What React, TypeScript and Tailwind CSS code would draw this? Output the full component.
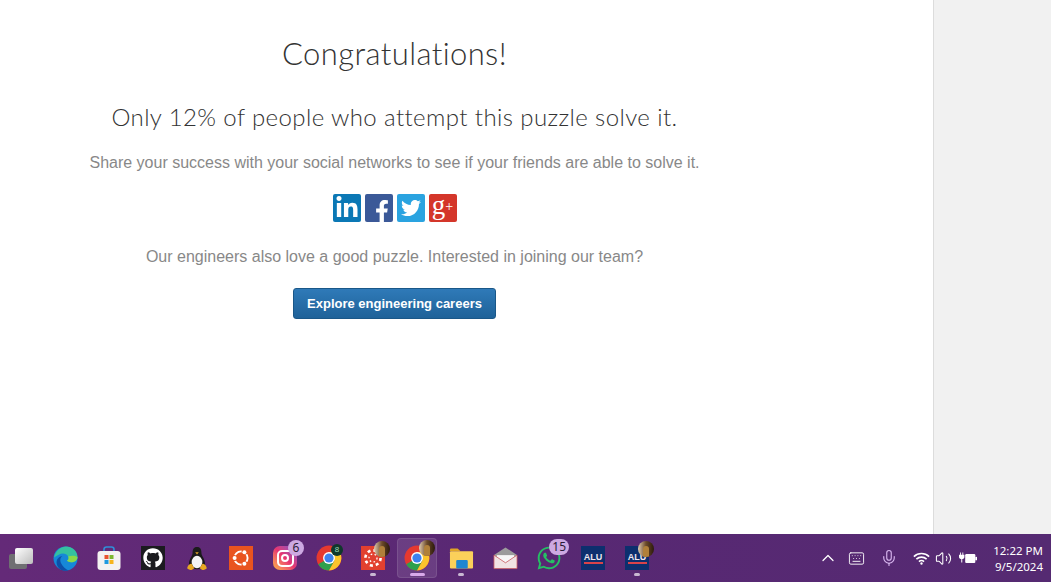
import { ReactNode } from "react";
import { FaFacebookF, FaGithub, FaLinkedinIn, FaTwitter, FaWhatsapp } from "react-icons/fa";
import { ChevronUp, Keyboard, Mic, Volume2 } from "lucide-react";

function Badge({ children }: { children: ReactNode }) {
  return (
    <span className="absolute -top-[6px] -right-[7px] flex h-[16px] min-w-[16px] items-center justify-center rounded-full bg-[#cda9e2] px-[3px] text-[12px] leading-none text-[#2b1a36] [font-family:'Noto_Sans',sans-serif]">
      {children}
    </span>
  );
}

function Avatar() {
  return (
    <span className="absolute -top-[5px] -right-[5px] h-[16px] w-[16px] overflow-hidden rounded-full bg-gradient-to-r from-[#e0cdb2] via-[#6b4a2a] to-[#2c1a0c]">
      <span className="mx-auto mt-[5px] block h-[11px] w-[6px] rounded-t-full bg-[#b0803a]" />
    </span>
  );
}

function Chrome() {
  return (
    <svg viewBox="0 0 48 48" className="h-[26px] w-[26px]">
      <circle cx="24" cy="24" r="23" fill="#e5392f" />
      <path d="M24 24 4.1 35.5A23 23 0 0 0 24 47L36 26Z" fill="#2fa04c" />
      <path d="M24 13h20A23 23 0 0 1 24 47L34 29Z" fill="#fbc42c" />
      <circle cx="24" cy="24" r="11" fill="#fff" />
      <circle cx="24" cy="24" r="8.5" fill="#3d82ee" />
    </svg>
  );
}

function Edge() {
  return (
    <svg viewBox="0 0 48 48" className="h-[25px] w-[25px]">
      <circle cx="24" cy="24" r="23" fill="#1688d8" />
      <path d="M2 22C5 8 16 1 25 1c12 0 22 9 22 20 0 7-6 10-12 10-5 0-8-2-8-3 3-2 4-5 2-8-3-6-12-7-18-3-4 2-7 4-9 5Z" fill="#35c1a0" />
      <path d="M30 47c-12 3-22-4-23-14-1-7 4-13 11-14-4 3-5 8-3 13 3 7 9 12 15 15Z" fill="#0e4fa8" />
      <path d="M47 21c0 7-6 10-12 10-5 0-8-2-8-3 3-2 4-5 2-8 6-2 13-2 18 1Z" fill="#8ad94a" />
    </svg>
  );
}

function Store() {
  return (
    <svg viewBox="0 0 26 26" className="h-[26px] w-[26px]">
      <path d="M8 7V4.5C8 3 9 2 10.5 2h5C17 2 18 3 18 4.5V7" fill="none" stroke="#2f8fd8" strokeWidth="1.6" />
      <rect x="1.5" y="6" width="23" height="19" rx="3" fill="#f4f2f1" />
      <rect x="8.5" y="10" width="4" height="4" fill="#e8532f" />
      <rect x="13.5" y="10" width="4" height="4" fill="#7cb82f" />
      <rect x="8.5" y="15" width="4" height="4" fill="#1f9ae0" />
      <rect x="13.5" y="15" width="4" height="4" fill="#f7b51c" />
    </svg>
  );
}

function Tux() {
  return (
    <svg viewBox="0 0 24 28" className="h-[25px] w-[22px]">
      <path d="M12 1c4 0 5 3 5 7 0 3 4 6 4 12 0 4-4 6-9 6s-9-2-9-6c0-6 4-9 4-12 0-4 1-7 5-7Z" fill="#1b1b1b" />
      <ellipse cx="12" cy="18" rx="6" ry="7" fill="#f5f5f5" />
      <path d="M10 7h4l-2 2.4Z" fill="#e0a526" />
      <path d="M1 25c1-4 3-5 5-5l3 5-3 2c-2 0-4-1-5-2Zm22 0c-1-4-3-5-5-5l-3 5 3 2c2 0 4-1 5-2Z" fill="#e8a822" />
    </svg>
  );
}

function Ubuntu() {
  return (
    <svg viewBox="0 0 24 24" className="h-[24px] w-[24px]">
      <rect width="24" height="24" fill="#e9541f" />
      <circle cx="12" cy="12" r="6.6" fill="none" stroke="#fff" strokeWidth="1.9" />
      <g fill="#e9541f">
        <circle cx="5" cy="12" r="3.1" />
        <circle cx="15.7" cy="5.6" r="3.1" />
        <circle cx="15.7" cy="18.4" r="3.1" />
      </g>
      <g fill="#fff">
        <circle cx="5.6" cy="12" r="2" />
        <circle cx="15.4" cy="6.2" r="2" />
        <circle cx="15.4" cy="17.8" r="2" />
      </g>
    </svg>
  );
}

function Folder() {
  return (
    <svg viewBox="0 0 26 24" className="h-[24px] w-[25px]">
      <path d="M1 3.5C1 2.5 1.7 2 2.5 2h6.5l3 3h-11Z" fill="#e0a526" />
      <rect x="1" y="5" width="24" height="18" rx="1" fill="#fbd05a" />
      <rect x="7.5" y="14" width="12" height="9" rx="1.2" fill="#1f86d0" />
    </svg>
  );
}

function Mail() {
  return (
    <svg viewBox="0 0 26 24" className="h-[24px] w-[25px]">
      <path d="M1 9 13 1l12 8v14H1Z" fill="#9c9c9c" />
      <path d="M4 9h18v8H4Z" fill="#f7f7f7" />
      <path d="M1 9v14h24V9L13 17Z" fill="#f1e3e3" stroke="#c8555d" strokeWidth="0.8" />
    </svg>
  );
}

function Insta() {
  return (
    <span className="flex h-[24px] w-[24px] items-center justify-center rounded-[7px] bg-gradient-to-tr from-[#fbb03b] via-[#e8336f] to-[#7a3fd0]">
      <span className="flex h-[17px] w-[17px] items-center justify-center rounded-[5px] border-2 border-white">
        <span className="h-[8px] w-[8px] rounded-full border-2 border-white" />
      </span>
    </span>
  );
}

function Canvas() {
  return (
    <svg viewBox="0 0 24 24" className="h-[24px] w-[24px]">
      <rect width="24" height="24" fill="#e2402f" />
      <circle cx="12" cy="12" r="7.6" fill="none" stroke="#fff" strokeWidth="2.6" strokeDasharray="3 3" />
      <circle cx="12" cy="12" r="4" fill="none" stroke="#fff" strokeWidth="1.3" strokeDasharray="1.6 2.4" />
    </svg>
  );
}

function Alu() {
  return (
    <span className="flex h-[24px] w-[24px] flex-col items-center justify-center bg-[#0d2f6e] text-[9px] font-bold leading-[9px] text-[#eee6ee] [font-family:'Liberation_Sans',sans-serif]">
      ALU
      <span className="h-[2px] w-[19px] bg-[#d8434a]" />
    </span>
  );
}

function WifiIcon() {
  return (
    <svg viewBox="0 0 16 12" className="h-[13px] w-[17px]" fill="none" stroke="#fff" strokeWidth="1.5">
      <path d="M.8 4.2a10.4 10.4 0 0 1 14.4 0" />
      <path d="M3.2 6.6a7 7 0 0 1 9.6 0" />
      <path d="M5.6 9a3.5 3.5 0 0 1 4.8 0" />
      <circle cx="8" cy="10.7" r="1.1" fill="#fff" stroke="none" />
    </svg>
  );
}

function BatteryIcon() {
  return (
    <svg viewBox="0 0 16 12" className="h-[14px] w-[18px]" fill="#fff">
      <path d="M1 1v2H0v2.2c0 1 .7 1.6 1.500 1.600H2V10h.9V6.800h.5c.8 0 1.400-.6 1.400-1.600V3h-1V1h-.8v2H1.800V1Z" />
      <rect x="5.500" y="2.500" width="9" height="8" rx="1" />
      <rect x="14.500" y="5" width="1.500" height="3" />
    </svg>
  );
}

const taskIcons: { icon: ReactNode; running?: boolean; active?: boolean }[] = [
  { icon: <Edge /> },
  { icon: <Store /> },
  {
    icon: (
      <span className="flex h-[24px] w-[24px] items-center justify-center bg-[#1b1b1f]">
        <FaGithub className="h-[20px] w-[20px] text-white" />
      </span>
    ),
  },
  { icon: <Tux /> },
  { icon: <Ubuntu /> },
  {
    icon: (
      <span className="relative">
        <Insta />
        <Badge>6</Badge>
      </span>
    ),
  },
  {
    icon: (
      <span className="relative block">
        <Chrome />
        <span className="absolute -top-[1px] -right-[1px] flex h-[12px] w-[12px] items-center justify-center rounded-full bg-[#10382c] text-[8px] leading-none text-[#9fd9b8]">
          8
        </span>
      </span>
    ),
  },
  {
    icon: (
      <span className="relative block">
        <Canvas />
        <Avatar />
      </span>
    ),
    running: true,
  },
  {
    icon: (
      <span className="relative block">
        <Chrome />
        <Avatar />
      </span>
    ),
    running: true,
    active: true,
  },
  { icon: <Folder />, running: true },
  { icon: <Mail /> },
  {
    icon: (
      <span className="relative block">
        <FaWhatsapp className="h-[26px] w-[26px] text-[#25c064]" />
        <Badge>15</Badge>
      </span>
    ),
  },
  { icon: <Alu /> },
  {
    icon: (
      <span className="relative block">
        <Alu />
        <Avatar />
      </span>
    ),
    running: true,
  },
];

export default function App() {
  return (
    <div className="flex h-[582px] w-[1051px] flex-col overflow-hidden bg-white [font-family:'Liberation_Sans',Arial,sans-serif]">
      <div className="flex min-h-0 flex-1">
        <main className="w-[933px] pt-[33px]">
          <div className="flex w-[789px] flex-col items-center text-center">
            <h1 className="text-[31px] font-light leading-[40px] tracking-[0.4px] text-[#333] [font-family:Lato,sans-serif]">
              Congratulations!
            </h1>
            <h2 className="mt-[28px] text-[24px] font-light leading-[32px] tracking-[0.4px] text-[#333] [font-family:Lato,sans-serif]">
              Only 12% of people who attempt this puzzle solve it.
            </h2>
            <p className="mt-[18px] text-[16px] leading-[24px] text-[#888]">
              Share your success with your social networks to see if your friends are able to solve it.
            </p>
            <div className="mt-[19px] flex gap-[4px]">
              <span className="flex h-[28px] w-[28px] items-center justify-center rounded-[2px] bg-[#0b78b5]">
                <FaLinkedinIn className="h-[24px] w-[24px] text-white" />
              </span>
              <span className="flex h-[28px] w-[28px] items-end justify-center overflow-hidden rounded-[2px] bg-[#3b5998]">
                <FaFacebookF className="h-[22px] w-[22px] translate-x-[3px] text-white" />
              </span>
              <span className="flex h-[28px] w-[28px] items-center justify-center rounded-[2px] bg-[#2aa3e0]">
                <FaTwitter className="h-[20px] w-[20px] text-white" />
              </span>
              <span className="flex h-[28px] w-[28px] items-center justify-center rounded-[2px] bg-[#d4362a] leading-none text-white [font-family:'Liberation_Serif',serif]">
                <span className="-mt-[6px] text-[27px]">g</span>
                <span className="-mt-[3px] text-[14px]">+</span>
              </span>
            </div>
            <p className="mt-[23px] text-[16px] leading-[24px] text-[#888]">
              Our engineers also love a good puzzle. Interested in joining our team?
            </p>
            <button className="mt-[19px] h-[31px] w-[203px] rounded-[3px] border border-[#1a5788] bg-gradient-to-b from-[#2f7ab8] to-[#1f6299] text-[13px] font-bold text-white">
              Explore engineering careers
            </button>
          </div>
        </main>
        <aside className="flex-1 border-l border-[#dcdcdc] bg-[#f1f1f1]" />
      </div>
      <footer className="flex h-[48px] items-center bg-gradient-to-r from-[#642a78] via-[#582873] to-[#552a72] text-white">
        <div className="w-[43px] pl-[9px]">
          <span className="relative block h-[21px] w-[24px]">
            <span className="absolute bottom-0 left-0 h-[15px] w-[18px] rounded-[2px] bg-[#6f6f72]" />
            <span className="absolute right-0 top-0 h-[16px] w-[18px] rounded-[2px] bg-gradient-to-br from-white to-[#bdbdbd]" />
          </span>
        </div>
        <div className="flex">
          {taskIcons.map((item, i) => (
            <div key={i} className="relative flex h-[40px] w-[44px] items-center justify-center">
              {item.active && <span className="absolute inset-y-0 left-[2px] right-[2px] rounded-[4px] border border-white/10 bg-white/10" />}
              <span className="relative">{item.icon}</span>
              {item.running && (
                <span className={`absolute bottom-[2px] h-[3px] rounded-full ${item.active ? "w-[15px] bg-[#d9a9ea]" : "w-[6px] bg-[#c9b8d2]"}`} />
              )}
            </div>
          ))}
        </div>
        <div className="ml-auto flex items-center pr-[8px] text-white">
          <ChevronUp className="h-[20px] w-[20px]" strokeWidth={1.5} />
          <Keyboard className="ml-[10px] h-[17px] w-[17px]" strokeWidth={1.3} />
          <Mic className="ml-[15px] h-[18px] w-[18px] text-[#d9b8f0]" strokeWidth={1.5} />
          <span className="ml-[15px]">
            <WifiIcon />
          </span>
          <Volume2 className="ml-[5px] h-[17px] w-[17px]" strokeWidth={1.5} />
          <span className="ml-[7px]">
            <BatteryIcon />
          </span>
          <div className="ml-[16px] w-[50px] whitespace-nowrap pt-[1px] text-right text-[11.5px] leading-[16px] [font-family:'Noto_Sans',sans-serif]">
            <div>12:22 PM</div>
            <div>9/5/2024</div>
          </div>
        </div>
      </footer>
    </div>
  );
}
